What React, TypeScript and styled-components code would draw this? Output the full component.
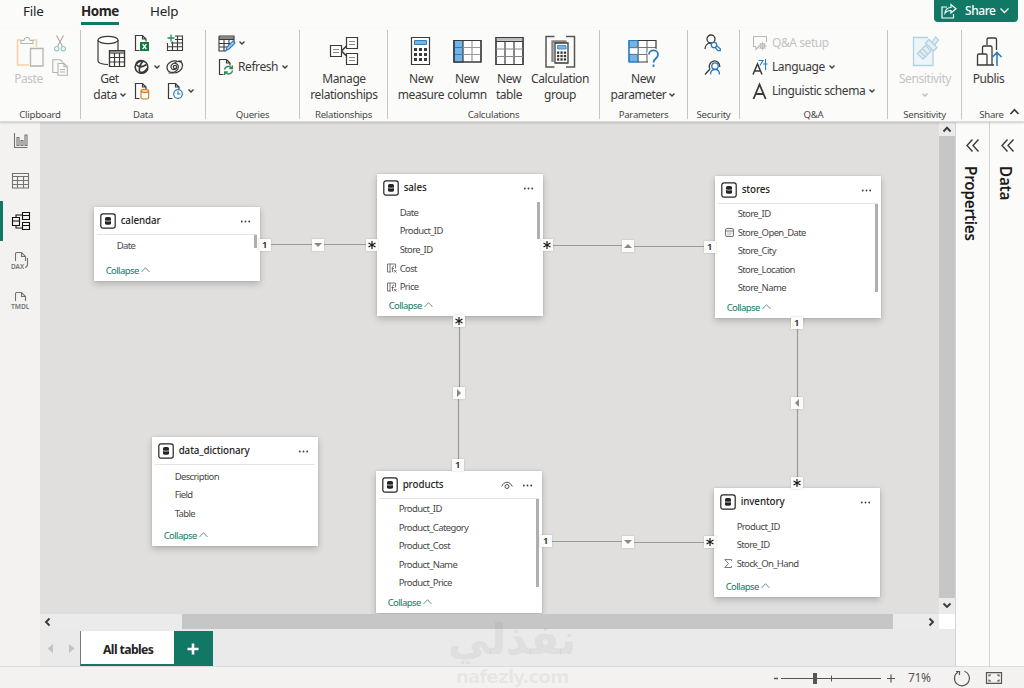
import React from "react";
import styled, { createGlobalStyle } from "styled-components";

const GREEN = "#117865";
const INK = "#3b3a39";
const BLUE = "#2b7cbf";

const GlobalStyle = createGlobalStyle`
  * { box-sizing: border-box; }
  body { margin: 0; overflow: hidden; font-family: "Noto Sans", "Open Sans", sans-serif; color: ${INK}; }
  svg { display: block; flex: none; overflow: visible; }
`;

/* ---------- shell ---------- */

const Shell = styled.div`
  position: relative;
  display: flex;
  flex-direction: column;
  width: 1024px;
  height: 688px;
  background: #fbfbfa;
  overflow: hidden;
`;

const TabStrip = styled.header`
  display: flex;
  justify-content: space-between;
  height: 28px;
  padding: 0 6px 0 23px;
`;

const MenuTabs = styled.nav`
  display: flex;
`;

const MenuTab = styled.div<{ $w: number; $gap: number; $active?: boolean }>`
  width: ${(p) => p.$w}px;
  height: 25px;
  margin-right: ${(p) => p.$gap}px;
  border-bottom: 3px solid ${(p) => (p.$active ? GREEN : "transparent")};
  font-size: 13.4px;
  line-height: 22px;
  letter-spacing: ${(p) => (p.$active ? -0.45 : -0.2)}px;
  font-weight: ${(p) => (p.$active ? 700 : 400)};
  color: #252423;
  white-space: nowrap;
`;

const ShareButton = styled.button`
  display: flex;
  align-items: center;
  gap: 9px;
  width: 84px;
  height: 22px;
  padding: 0 8px 0 7px;
  border: 0;
  border-radius: 0 0 4px 4px;
  background: ${GREEN};
  color: #fff;
  font: 500 12px/22px "Noto Sans", sans-serif;
  letter-spacing: -0.45px;
`;

const ShareText = styled.span`
  width: 30px;
  margin: 0 -4px 0 -1px;
`;

/* ---------- ribbon ---------- */

const Ribbon = styled.section`
  display: grid;
  grid-template-columns: 81px 125px 94px 88px 212px 88px 52px 148px 74px 62px;
  height: 94px;
  flex: none;
  padding-top: 2px;
  border-bottom: 1px solid #dddcdb;
  box-shadow: 0 1px 2px rgba(0, 0, 0, 0.18);
  z-index: 2;
`;

const Group = styled.div<{ $last?: boolean }>`
  display: flex;
  flex-direction: column;
  height: 89px;
  border-right: 1px solid ${(p) => (p.$last ? "transparent" : "#c8c6c4")};
`;

const GroupBody = styled.div<{ $left?: number }>`
  display: flex;
  flex: 1;
  min-height: 0;
  padding-left: ${(p) => p.$left ?? 0}px;
`;

const GroupName = styled.div<{ $last?: boolean }>`
  height: 13px;
  margin-bottom: -2px;
  position: relative;
  text-align: center;
  font-size: 9.6px;
  line-height: 14px;
  letter-spacing: -0.25px;
  color: #494847;
  padding-right: ${(p) => (p.$last ? 2 : 0)}px;
`;

const RibbonToggle = styled.span`
  position: absolute;
  right: 4px;
  top: 1px;
`;

const BigButton = styled.div<{ $w: number; $faded?: boolean }>`
  display: flex;
  flex-direction: column;
  align-items: center;
  width: ${(p) => p.$w}px;
  padding-top: 5px;
  font-size: 12px;
  line-height: 16px;
  letter-spacing: -0.42px;
  text-align: center;
  white-space: nowrap;
  color: ${(p) => (p.$faded ? "#c4c3c2" : INK)};
`;

const BigIcon = styled.div`
  display: grid;
  place-items: center;
  width: 32px;
  height: 32px;
  margin-bottom: 4px;
`;

const Inline = styled.span`
  display: flex;
  align-items: center;
  justify-content: center;
  gap: 3px;
  min-height: 16px;
`;

const Stack = styled.div<{ $w?: number; $left?: number }>`
  display: flex;
  flex-direction: column;
  padding-top: 1px;
  padding-left: ${(p) => p.$left ?? 0}px;
  width: ${(p) => (p.$w ? `${p.$w}px` : "auto")};
`;

const SmallButton = styled.div<{ $faded?: boolean }>`
  display: flex;
  align-items: center;
  gap: 4px;
  height: 24px;
  font-size: 12px;
  line-height: 16px;
  letter-spacing: -0.42px;
  white-space: nowrap;
  color: ${(p) => (p.$faded ? "#c4c3c2" : INK)};
`;

/* ---------- body ---------- */

const Body = styled.main`
  display: flex;
  height: 544px;
  flex: none;
`;

const Rail = styled.aside`
  display: flex;
  flex-direction: column;
  width: 40px;
  background: #f3f2f1;
  margin-top: -1px;
`;

const RailItem = styled.div<{ $active?: boolean }>`
  display: grid;
  place-items: center;
  height: 40px;
  padding-right: 1px;
  border-left: 3px solid ${(p) => (p.$active ? GREEN : "transparent")};
`;

const Workspace = styled.section`
  display: grid;
  grid-template-columns: 899px 16px;
  grid-template-rows: 492px 15px 37px;
  width: 915px;
`;

const Canvas = styled.div`
  position: relative;
  overflow: hidden;
  background: #e0dfde;
`;

const VScroll = styled.div`
  display: flex;
  flex-direction: column;
  align-items: center;
  background: #ebebeb;
`;

const VThumb = styled.div`
  width: 100%;
  height: 462px;
  background: #c6c6c6;
`;

const ScrollArrow = styled.div<{ $v?: boolean }>`
  display: grid;
  place-items: center;
  width: ${(p) => (p.$v ? 16 : 15)}px;
  height: ${(p) => (p.$v ? 14 : 15)}px;
`;

const HScroll = styled.div`
  display: flex;
  justify-content: space-between;
  background: #ebebeb;
`;

const HTrack = styled.div`
  flex: 1;
  padding-left: 127px;
`;

const HThumb = styled.div`
  width: 711px;
  height: 15px;
  background: #c6c6c6;
`;

const Corner = styled.div`
  background: #fff;
`;

const PageBar = styled.div`
  grid-column: 1 / 3;
  display: flex;
  align-items: flex-start;
  background: #eaeaea;
`;

const PageArrows = styled.div`
  display: flex;
  gap: 16px;
  width: 40px;
  padding: 15px 0 0 7px;
`;

const PageTab = styled.div`
  width: 94px;
  height: 35px;
  margin-top: 2px;
  padding-left: 2px;
  border-left: 1px solid #7a7978;
  border-bottom: 2px solid ${GREEN};
  background: #fff;
  text-align: center;
  font-size: 12.2px;
  font-weight: 700;
  letter-spacing: -0.6px;
  line-height: 37px;
  color: #252423;
`;

const AddPage = styled.div`
  display: grid;
  place-items: center;
  width: 39px;
  height: 35px;
  margin-top: 2px;
  background: ${GREEN};
`;

const SidePane = styled.aside`
  display: flex;
  flex-direction: column;
  align-items: center;
  width: 35px;
  padding-top: 17px;
  gap: 14px;
  border-left: 1px solid #d6d5d4;
  background: #fbfbfa;
`;

const PaneTitle = styled.h2`
  margin: 0 2px 0 0;
  writing-mode: vertical-rl;
  font-size: 15.2px;
  font-weight: 600;
  letter-spacing: -0.2px;
  line-height: 20px;
  color: #1b1a19;
`;

const StatusBar = styled.footer`
  display: flex;
  align-items: center;
  justify-content: flex-end;
  flex: none;
  height: 22px;
  padding: 1px 22px 0 0;
  border-top: 1px solid #dddcdb;
  background: #f3f2f1;
`;

const ZoomValue = styled.span`
  width: 46px;
  padding-left: 12px;
  font-size: 12px;
  line-height: 16px;
  letter-spacing: -0.4px;
  color: #555;
  margin-right: 12px;
`;

const StatusGap = styled.span`
  width: 15px;
`;

const Watermark = styled.div`
  position: absolute;
  left: 441px;
  top: 612px;
  width: 142px;
  z-index: 4;
  text-align: center;
  color: rgba(120, 120, 120, 0.11);
`;

const WatermarkArabic = styled.div`
  height: 53px;
  font: 700 42px/56px "DejaVu Sans", sans-serif;
  white-space: nowrap;
  -webkit-text-stroke: 1px rgba(120, 120, 120, 0.04);
`;

const WatermarkLatin = styled.div`
  font: 700 18.5px/24px "DejaVu Sans", sans-serif;
  letter-spacing: -1px;
`;

/* ---------- model cards ---------- */

const Card = styled.article<{ $x: number; $y: number; $h: number }>`
  position: absolute;
  left: ${(p) => p.$x}px;
  top: ${(p) => p.$y}px;
  display: flex;
  flex-direction: column;
  width: 166px;
  height: ${(p) => p.$h}px;
  background: #fff;
  box-shadow: 0 3px 7px rgba(0, 0, 0, 0.2), 0 0 2px rgba(0, 0, 0, 0.14);
`;

const CardHead = styled.div<{ $line?: boolean }>`
  display: flex;
  align-items: center;
  gap: 5px;
  height: 28px;
  margin: 0 3px;
  padding: 1px 5px 0 3px;
  border-bottom: 1px solid ${(p) => (p.$line ? "#e6e5e4" : "transparent")};
`;

const CardName = styled.span`
  flex: 1;
  font-size: 9.8px;
  font-weight: 500;
  line-height: 14px;
  padding-bottom: 1px;
  letter-spacing: -0.08px;
  color: #252423;
`;

const EyeSlot = styled.span`
  margin-right: 4px;
`;

const CardBody = styled.div`
  display: flex;
  flex: 1;
  justify-content: space-between;
  min-height: 0;
`;

const FieldList = styled.div<{ $top: number }>`
  padding-top: ${(p) => p.$top}px;
`;

const Field = styled.div`
  display: grid;
  grid-template-columns: 13px auto;
  align-items: center;
  height: 18.6px;
  padding-left: 10px;
  font-size: 9.5px;
  letter-spacing: -0.62px;
  white-space: nowrap;
  color: #494847;
`;

const CardThumb = styled.div<{ $h: number }>`
  width: 3px;
  height: ${(p) => p.$h}px;
  margin-right: 3px;
  background: #b0afae;
`;

const Collapse = styled.div`
  display: flex;
  align-items: center;
  gap: 2px;
  height: 22px;
  padding: 0 0 0 12px;
  font-size: 9.5px;
  letter-spacing: -0.58px;
  color: ${GREEN};
`;

const Marker = styled.div<{ $x: number; $y: number }>`
  position: absolute;
  left: ${(p) => p.$x - 6}px;
  top: ${(p) => p.$y - 6}px;
  display: grid;
  place-items: center;
  width: 12px;
  height: 12px;
  background: #fbfbfa;
  box-shadow: 0 0 2px rgba(0, 0, 0, 0.18);
  font-size: 9.5px;
  font-weight: 600;
  line-height: 12px;
  color: #252423;
`;

const Wires = styled.svg`
  position: absolute;
  left: 0;
  top: 0;
`;

/* ---------- icons ---------- */

const Chevron = ({ w = 6, color = INK, sw = 1.3, up = false }: { w?: number; color?: string; sw?: number; up?: boolean }) => (
  <svg width={w} height={w / 2 + 1} viewBox={`0 0 ${w} ${w / 2 + 1}`} fill="none" stroke={color} strokeWidth={sw}>
    <path d={up ? `M.5 ${w / 2 + 0.5}L${w / 2} .7L${w - 0.5} ${w / 2 + 0.5}` : `M.5 .5L${w / 2} ${w / 2}L${w - 0.5} .5`} />
  </svg>
);

const Svg = ({ w, h, children, s = INK, sw = 1.1 }: { w: number; h: number; children: React.ReactNode; s?: string; sw?: number }) => (
  <svg width={w} height={h} viewBox={`0 0 ${w} ${h}`} fill="none" stroke={s} strokeWidth={sw}>
    {children}
  </svg>
);

const PasteIcon = () => (
  <Svg w={32} h={32} s="#b5b4b3">
    <path d="M9 5H4.500V30H16M19 5h4.500v7" stroke="#f3d3a2" strokeWidth="1.600" />
    <path d="M8 8.500V5.500h3a3 3 0 0 1 6 0h3v3z" />
    <path d="M17.500 13.500h12.500v17.500h-12.500z" fill="#fbfbfa" strokeWidth="1.300" />
  </Svg>
);
const CutIcon = () => (
  <Svg w={16} h={17} s="#a9a8a7">
    <path d="M4.500 .5l6 11M11.500 .5l-6 11" />
    <circle cx="4.700" cy="13.700" r="2.200" stroke="#8fc7c4" />
    <circle cx="11.300" cy="13.700" r="2.200" stroke="#8fc7c4" />
  </Svg>
);
const CopyIcon = () => (
  <Svg w={16} h={17} s="#b5b4b3">
    <path d="M6 13.500H.8V.8h7.500l3 3" />
    <path d="M6 4.500h6l3.300 3.300v8.400H6zM12 4.500v3.300h3.300M8 10.500h5M8 13h5" fill="#fbfbfa" />
  </Svg>
);
const GetDataIcon = () => (
  <Svg w={32} h={32} sw={1.2}>
    <path d="M4 5v21c0 2 4.500 3.500 10 3.500M24 5v10" />
    <ellipse cx="14" cy="5" rx="10" ry="3.700" fill="#fff" />
    <path d="M15.500 15.500h15v16h-15z" fill="#fff" />
    <path d="M15.500 17.500h15" strokeWidth="3" stroke="#888" />
    <path d="M15.500 22.500h15M15.500 27h15M20.500 18v13M25.500 18v13M15.500 15.500h15v16h-15z" />
  </Svg>
);
const Page = ({ children }: { children: React.ReactNode }) => (
  <Svg w={16} h={18} sw={1.2}>
    <path d="M5.500 16.500H1.500V1.500H8.500l3.500 3.500v2.500M8.500 1.500v3.500h3.500" />
    {children}
  </Svg>
);
const ExcelIcon = () => (
  <Page>
    <path d="M6 8h9v9H6z" fill="#107c41" stroke="none" />
    <path d="M8.700 10.200l3.600 4.800M12.300 10.200l-3.600 4.800" stroke="#fff" strokeWidth="1.300" />
  </Page>
);
const HubIcon = () => (
  <Svg w={16} h={16}>
    <circle cx="7.500" cy="8" r="6.300" strokeWidth="1.600" />
    <path d="M2 5.500C4.500 8 8.500 8.500 12.500 5.500M6 14C4.500 10 5.500 6 9 2" strokeWidth="1.700" />
    <path d="M2.500 4.500C4.500 1.500 8 1.500 9.500 3M13.500 9.500C12 13 8.500 14.500 6 13.500" strokeWidth="2.400" />
  </Svg>
);
const SourceIcon = () => (
  <Page>
    <path d="M7 9v6.500c0 .8 1.700 1.500 3.800 1.500s3.800-.7 3.800-1.500V9" stroke="#d9822b" fill="#fff" />
    <ellipse cx="10.800" cy="9" rx="3.800" ry="1.600" stroke="#d9822b" fill="#f7d3a5" />
  </Page>
);
const EnterTableIcon = () => (
  <Svg w={18} h={18}>
    <path d="M9 2h7.500v14.500h-15V9M9 5.500h7.500M5 9h11.500M1.500 12.700h15M6.500 7.500v9M11.500 2v14.500" />
    <path d="M5 .5v7M1.500 4h7" stroke="#218d6b" strokeWidth="1.300" />
  </Svg>
);
const SwirlIcon = () => (
  <Svg w={18} h={16} sw={1.2}>
    <path d="M11 2C6 1 1 4 1 8.500c0 4.500 5 6 8.500 4 3.500-2 4-6.500 .5-8C7 3.500 4.500 6 5 8.500c.5 2.500 4 3 5.500 .5" />
    <path d="M2.500 14H7c5 0 9.500-3 9.500-7.500S11.500 1.500 8.500 4M12.500 2H16" />
    <circle cx="9" cy="8" r="1.700" />
  </Svg>
);
const RecentIcon = () => (
  <Svg w={18} h={18} sw={1.2}>
    <path d="M6.500 16.500H2.500V1.500H9.500l3.500 3.500v2M9.500 1.500v3.500h3.500" />
    <circle cx="12" cy="12" r="4.300" stroke={BLUE} fill="#fff" />
    <path d="M12 9.300V12h2.500" stroke={BLUE} />
  </Svg>
);
const TransformIcon = () => (
  <Svg w={17} h={17}>
    <path d="M1 3h15" strokeWidth="3" stroke="#888" />
    <path d="M1 1h15v6M8 16H1V1M1 4.500h15M1 8.500h12M1 12h8M6 4.500v11M11 4.500v6" />
    <path d="M8 15.500l1-3.500 6-6 2 2-6 6z" stroke={BLUE} fill="#a9d0f0" />
  </Svg>
);
const RefreshPageIcon = () => (
  <Page>
    <path d="M6.500 11.500a4 4 0 0 1 7.300-1.200M14.500 12.500a4 4 0 0 1-7.300 1.700M14.300 7.500v3h-3M6.700 17v-3h3" stroke="#2e8b57" strokeWidth="1.400" />
  </Page>
);
const ManageIcon = () => (
  <Svg w={30} h={30} sw={1.2}>
    <path d="M12.500 15l5-5M12.500 15l5 5" strokeWidth="1.600" />
    <path d="M1.500 9.500h11v11h-11zM17.500 1.500h11v11h-11zM17.500 17.500h11v11h-11z" fill="#fff" />
    <path d="M4 13.500h6M4 16.500h6M20 5.500h6M20 8.500h6M20 21.500h6M20 24.500h6" stroke="#888" />
  </Svg>
);
const CalcKeys = ({ x, y, d, s }: { x: number; y: number; d: number; s: number }) => (
  <g fill={INK} stroke="none">
    {[0, 1, 2].map((r) => [0, 1, 2].map((c) => <rect key={`${r}${c}`} x={x + c * d} y={y + r * d} width={s} height={s} />))}
  </g>
);
const MeasureIcon = () => (
  <Svg w={20} h={30} sw={1.2}>
    <path d="M.5 1.500h18v27h-18z" fill="#fff" />
    <path d="M3.500 4.500h12v4h-12z" fill="#6db5ea" stroke="#3a7db0" strokeWidth="1" />
    <CalcKeys x={3} y={12} d={5} s={3} />
  </Svg>
);
const ColumnIcon = () => (
  <Svg w={29} h={24} sw={1.2}>
    <path d="M1 1.500h27v21.500H1z" fill="#fff" />
    <path d="M1 1.500h9v21.500H1z" fill="#6db5ea" />
    <path d="M10 8.500h18M10 15.500h18M19 1.500v21.500" stroke="#999" />
    <path d="M1 8.500h9M1 15.500h9" stroke={BLUE} />
    <path d="M1 1.500h27v21.500H1z" />
  </Svg>
);
const TableIcon = () => (
  <Svg w={29} h={30} sw={1.2}>
    <path d="M1 1.500h27v27H1z" fill="#fff" />
    <path d="M1 3.300h27" stroke="#bbb" strokeWidth="3" />
    <path d="M1 5.500h27M10 5.500v23M19 5.500v23M1 1.500h27v27H1z" />
    <path d="M1 13h27M1 20.500h27" stroke="#888" />
  </Svg>
);
const CalcGroupIcon = () => (
  <Svg w={32} h={33} sw={1.3}>
    <path d="M10.500 1.500H2v30.500h8.500M22 1.500h8.500v30.500H22" stroke="#555" strokeWidth="1.500" />
    <path d="M8.500 27V6.500h14" stroke="#888" strokeWidth="2.400" />
    <path d="M11 8h13v20H11z" fill="#fff" />
    <path d="M13.500 10.500h8.500v3.500h-8.500z" fill="#6db5ea" stroke="#3a7db0" strokeWidth=".8" />
    <CalcKeys x={13} y={16.5} d={3.4} s={2.3} />
  </Svg>
);
const ParameterIcon = () => (
  <Svg w={31} h={25} sw={1.2}>
    <path d="M1 1.500h27v21.500H1z" fill="#fff" stroke="none" />
    <path d="M1 1.500h9v21.500H1z" fill="#6db5ea" stroke={BLUE} />
    <path d="M1 8.500h27M1 15.500h19M19 1.500v21.500M10 1.500v21.500" stroke="#777" />
    <path d="M1.500 12h8" stroke="#fff" strokeWidth="5.500" />
    <path d="M10 23h10M10 1.500h18V10" />
    <path d="M1 1.500v21.500M1 23h9M1 1.500h9" stroke={BLUE} />
    <path d="M21 15.500c0-5.500 9-5.500 9 0 0 4-4.500 4-4.500 8" stroke="#fbfbfa" strokeWidth="4" />
    <path d="M21 15.500c0-5.500 9-5.500 9 0 0 4-4.500 4-4.500 8M25.500 25.500v2.500" stroke={BLUE} strokeWidth="1.800" />
  </Svg>
);
const RolesIcon = () => (
  <Svg w={18} h={18} sw={1.3}>
    <circle cx="7" cy="5" r="4" />
    <path d="M1 15c0-3.500 2.500-6 6-6" />
    <circle cx="10" cy="11" r="2.700" stroke={BLUE} fill="#fbfbfa" />
    <path d="M12.300 11.500l4 3.200v2h-2.500l-2.500-3" stroke={BLUE} />
  </Svg>
);
const ViewAsIcon = () => (
  <Svg w={18} h={18} sw={1.3}>
    <path d="M6 11A5.300 5.300 0 1 1 15.800 9M1 16.500l5-5.500" />
    <circle cx="11" cy="8" r="3.200" stroke={BLUE} />
    <path d="M6.500 16.500c0-3.500 2-5 4.500-5s4.500 1.500 4.500 5" stroke={BLUE} />
  </Svg>
);
const QaIcon = () => (
  <Svg w={16} h={16} s="#b9b8b7">
    <path d="M4 11.500v3l3-3M4 11.500H1.500V1.500h13V7" />
    <circle cx="10.500" cy="11" r="2.500" />
    <path d="M10.500 6.700v8.600M6.200 11h8.600M7.500 8l6 6M13.500 8l-6 6" strokeWidth=".8" />
  </Svg>
);
const LanguageIcon = () => (
  <Svg w={16} h={17} sw={1.5}>
    <path d="M1 15.500L5.500 5l4.500 10.500M2.500 12h6" />
    <path d="M6.500 1.500h4.500L8 6.500M13.500 0v11M11 5h4.500" stroke={BLUE} strokeWidth="1.100" />
  </Svg>
);
const SchemaIcon = () => (
  <Svg w={16} h={17} sw={1.8}>
    <path d="M1.500 16L7.500 1.500 13.700 16M3.800 11h7.500" />
  </Svg>
);
const SensitivityIcon = () => (
  <Svg w={28} h={32} s="#b3d1e2" sw={1.3}>
    <path d="M22 15v15.500H2.500V2.500H17" fill="#edf5f9" />
    <path d="M6.500 18.500l8-8 5.500 5.500-8 8z" fill="#e4eff5" />
    <path d="M9 16.500l5 5M11.500 14l5 5" />
    <path d="M14.500 8l3.500-3.500 8 8-3.500 3.500zM21 7.500l3.500-5.500 3 3-4 5" fill="#e4eff5" />
  </Svg>
);
const PublishIcon = () => (
  <Svg w={26} h={31} sw={1.3}>
    <path d="M11 9V3.500q0-1.500 1.500-1.500h6.500q1.500 0 1.500 1.500V14M6.500 18v-6.500q0-1.500 1.500-1.500h6.500q1.500 0 1.500 1.500V29M1.500 29v-9.500q0-1.500 1.500-1.500h6.500q1.500 0 1.500 1.500V29M.8 29H18" />
    <path d="M21 30V17M16.500 21l4.500-4.500L25.500 21" stroke={BLUE} strokeWidth="1.600" />
  </Svg>
);
const ShareIcon = () => (
  <Svg w={16} h={17} s="#fff" sw={1.2}>
    <path d="M6 4H1v11h11.500v-4M4 10c.5-4 3-5.500 6-5.500V1.500l5 4.300-5 4.200V7.500C7.500 7.500 5.500 8 4 10z" />
  </Svg>
);

const RAIL = "#737271";
const ReportRailIcon = () => (
  <Svg w={15} h={16} s={RAIL}>
    <path d="M1.500 0v14.500h13M4 4.500h2v8h-2zM8 7.500h2v5h-2zM12 2h2v10.500h-2z" />
  </Svg>
);
const TableRailIcon = () => (
  <Svg w={17} h={16} s={RAIL}>
    <path d="M.5 .5h16v14.500H.5zM.5 3.500h16M.5 7.500h16M.5 11.500h16M5.500 3.500v12M11.500 3.500v12" />
  </Svg>
);
const ModelRailIcon = () => (
  <Svg w={19} h={18} s="#111" sw={1.1}>
    <path d="M1.500 5.500h7v8h-7zM1.500 9h7M11.500 .5h7v7h-7zM11.500 3.500h7M11.500 10.500h7v7h-7zM11.500 13.500h7M5 5.500V3h6.500M5 13.500V16h6.500" />
  </Svg>
);
const ScriptRailIcon = ({ name }: { name: string }) => (
  <svg width="19" height="18" viewBox="0 0 19 18" fill="none" stroke={RAIL} strokeWidth="1.1">
    <path d={name.length === 3 ? "M4.500 9V1.500q0-1 1-1h5l4 4V9M10.500 .5v4h4M16.500 6v6q0 3-2.500 3.500" : "M4.500 9V1.500q0-1 1-1h5l4 4V9M10.500 .5v4h4"} />
    <text x="0" y="16.500" stroke="none" fill={RAIL} fontSize="7.200" fontWeight="600" fontFamily="Noto Sans" textLength={name.length === 3 ? 13 : 18.500} lengthAdjust="spacingAndGlyphs">
      {name}
    </text>
  </svg>
);

const CardIcon = () => (
  <Svg w={16} h={16} s="#252423" sw={1.2}>
    <rect x=".8" y=".8" width="14.400" height="14.400" rx="2.200" />
    <path d="M5 5.200c0-1.500 6-1.500 6 0v5.500c0 1.500-6 1.500-6 0z" fill="#252423" stroke="none" />
    <path d="M4.500 7.700q3.500 1 7 0" stroke="#fff" strokeWidth=".7" />
  </Svg>
);
const Dots = () => (
  <svg width="12" height="3" viewBox="0 0 12 3" fill="#3b3a39">
    <circle cx="1.800" cy="1.500" r=".9" />
    <circle cx="5.500" cy="1.500" r=".9" />
    <circle cx="9.200" cy="1.500" r=".9" />
  </svg>
);
const EyeIcon = () => (
  <Svg w={12} h={9} sw={0.9}>
    <path d="M.7 5.500C2 2.500 4 1.200 6 1.200s4 1.300 5.300 4.300" />
    <circle cx="6" cy="5.500" r="2" />
  </Svg>
);
const CalcFieldIcon = () => (
  <Svg w={10} h={10} s="#666" sw={0.9}>
    <path d="M.5 1h8v4.500M4 9H.5V1M3 1v8M5.500 9V4.500q0-1.500 1.500-1.500M4.500 5.500h2.500M7 7l2.500 2.500M9.500 7L7 9.500" />
  </Svg>
);
const DateFieldIcon = () => (
  <Svg w={9} h={9} s="#666" sw={0.9}>
    <rect x=".5" y=".5" width="8" height="8" rx="1.500" />
    <path d="M.5 3h8M2.500 5h1M4.500 5h1M6.500 5h.7M2.500 6.800h1M4.500 6.800h1" />
  </Svg>
);
const SumFieldIcon = () => (
  <Svg w={9} h={9} s="#666" sw={0.9}>
    <path d="M7.500 2V.6H.8L4.500 4.500.8 8.500h6.700V7" />
  </Svg>
);

/* ---------- data ---------- */

type FieldDef = { name: string; kind?: "calc" | "date" | "sum" };
type CardDef = { name: string; x: number; y: number; h: number; top?: number; thumb?: number; line?: boolean; eye?: boolean; fields: FieldDef[] };

const cards: CardDef[] = [
  { name: "calendar", x: 54, y: 85, h: 74, thumb: 13, line: true, fields: [{ name: "Date" }] },
  {
    name: "sales", x: 337, y: 52, h: 142, thumb: 37,
    fields: [{ name: "Date" }, { name: "Product_ID" }, { name: "Store_ID" }, { name: "Cost", kind: "calc" }, { name: "Price", kind: "calc" }],
  },
  {
    name: "stores", x: 675, y: 54, h: 142, top: 0.3, thumb: 88, line: true,
    fields: [{ name: "Store_ID" }, { name: "Store_Open_Date", kind: "date" }, { name: "Store_City" }, { name: "Store_Location" }, { name: "Store_Name" }],
  },
  { name: "data_dictionary", x: 112, y: 315, h: 109, top: 2, line: true, fields: [{ name: "Description" }, { name: "Field" }, { name: "Table" }] },
  {
    name: "products", x: 336, y: 349, h: 142, top: 0.3, thumb: 88, line: true, eye: true,
    fields: [{ name: "Product_ID" }, { name: "Product_Category" }, { name: "Product_Cost" }, { name: "Product_Name" }, { name: "Product_Price" }],
  },
  { name: "inventory", x: 674, y: 366, h: 109, fields: [{ name: "Product_ID" }, { name: "Store_ID" }, { name: "Stock_On_Hand", kind: "sum" }] },
];

type MarkerKind = "one" | "many" | "up" | "down" | "left" | "right";
const markers: [number, number, MarkerKind][] = [
  [225, 123, "one"], [278, 123, "down"], [332, 123, "many"],
  [507, 123, "many"], [588, 124, "up"], [670, 125, "one"],
  [419, 199, "many"], [419, 271, "right"], [418, 343, "one"],
  [757, 201, "one"], [757, 281, "left"], [757, 361, "many"],
  [506, 419, "one"], [588, 420, "down"], [670, 420, "many"],
];

const arrows: Record<string, string> = {
  up: "M1 7L5 3L9 7z",
  down: "M1 3L5 7L9 3z",
  left: "M7 1L3 5L7 9z",
  right: "M3 1L7 5L3 9z",
};

const fieldIcon = { calc: <CalcFieldIcon />, date: <DateFieldIcon />, sum: <SumFieldIcon /> };

const MarkerGlyph = ({ kind }: { kind: MarkerKind }) => {
  if (kind === "one") return <>1</>;
  return (
    <svg width="10" height="10" viewBox="0 0 10 10">
      {kind === "many" ? (
        <path d="M5 1v8M1.500 3l7 4M8.500 3l-7 4" stroke="#1b1a19" strokeWidth="1.200" />
      ) : (
        <path d={arrows[kind]} fill="#8a8988" />
      )}
    </svg>
  );
};

const ModelCard = ({ card }: { card: CardDef }) => (
  <Card $x={card.x} $y={card.y} $h={card.h}>
    <CardHead $line={card.line}>
      <CardIcon />
      <CardName>{card.name}</CardName>
      {card.eye && <EyeSlot><EyeIcon /></EyeSlot>}
      <Dots />
    </CardHead>
    <CardBody>
      <FieldList $top={card.top ?? 1}>
        {card.fields.map((f) => (
          <Field key={f.name}>
            <span>{f.kind && fieldIcon[f.kind]}</span>
            {f.name}
          </Field>
        ))}
      </FieldList>
      {card.thumb && <CardThumb $h={card.thumb} />}
    </CardBody>
    <Collapse>
      Collapse <Chevron w={9} sw={0.9} color="#58877c" up />
    </Collapse>
  </Card>
);

const Big = ({ w, icon, top, bottom, faded, menu }: { w: number; icon: React.ReactNode; top: string; bottom?: string; faded?: boolean; menu?: boolean }) => (
  <BigButton $w={w} $faded={faded}>
    <BigIcon>{icon}</BigIcon>
    <span>{top}</span>
    <Inline>
      {bottom}
      {menu && <Chevron color={faded ? "#bbb" : INK} />}
    </Inline>
  </BigButton>
);

export default function App() {
  return (
    <>
      <GlobalStyle />
      <Shell>
        <TabStrip>
          <MenuTabs>
            <MenuTab $w={21} $gap={37}>File</MenuTab>
            <MenuTab $w={38} $gap={31} $active>Home</MenuTab>
            <MenuTab $w={29} $gap={0}>Help</MenuTab>
          </MenuTabs>
          <ShareButton>
            <ShareIcon />
            <ShareText>Share</ShareText>
            <Chevron w={9} color="#fff" />
          </ShareButton>
        </TabStrip>

        <Ribbon>
          <Group>
            <GroupBody $left={7}>
              <Big w={43} icon={<PasteIcon />} top="Paste" faded />
              <Stack $left={2}>
                <SmallButton><CutIcon /></SmallButton>
                <SmallButton><CopyIcon /></SmallButton>
              </Stack>
            </GroupBody>
            <GroupName>Clipboard</GroupName>
          </Group>
          <Group>
            <GroupBody $left={5}>
              <Big w={47} icon={<GetDataIcon />} top="Get" bottom="data" menu />
              <Stack $w={33} $left={1}>
                <SmallButton><ExcelIcon /></SmallButton>
                <SmallButton><HubIcon /><Chevron /></SmallButton>
                <SmallButton><SourceIcon /></SmallButton>
              </Stack>
              <Stack>
                <SmallButton><EnterTableIcon /></SmallButton>
                <SmallButton><SwirlIcon /></SmallButton>
                <SmallButton><RecentIcon /><Chevron /></SmallButton>
              </Stack>
            </GroupBody>
            <GroupName>Data</GroupName>
          </Group>
          <Group>
            <GroupBody $left={12}>
              <Stack>
                <SmallButton><TransformIcon /><Chevron /></SmallButton>
                <SmallButton><RefreshPageIcon />Refresh<Chevron /></SmallButton>
              </Stack>
            </GroupBody>
            <GroupName>Queries</GroupName>
          </Group>
          <Group>
            <GroupBody $left={6}>
              <Big w={76} icon={<ManageIcon />} top="Manage" bottom="relationships" />
            </GroupBody>
            <GroupName>Relationships</GroupName>
          </Group>
          <Group>
            <GroupBody $left={9}>
              <Big w={48} icon={<MeasureIcon />} top="New" bottom="measure" />
              <Big w={44} icon={<ColumnIcon />} top="New" bottom="column" />
              <Big w={40} icon={<TableIcon />} top="New" bottom="table" />
              <Big w={62} icon={<CalcGroupIcon />} top="Calculation" bottom="group" />
            </GroupBody>
            <GroupName>Calculations</GroupName>
          </Group>
          <Group>
            <GroupBody $left={7}>
              <Big w={72} icon={<ParameterIcon />} top="New" bottom="parameter" menu />
            </GroupBody>
            <GroupName>Parameters</GroupName>
          </Group>
          <Group>
            <GroupBody $left={16}>
              <Stack>
                <SmallButton><RolesIcon /></SmallButton>
                <SmallButton><ViewAsIcon /></SmallButton>
              </Stack>
            </GroupBody>
            <GroupName>Security</GroupName>
          </Group>
          <Group>
            <GroupBody $left={12}>
              <Stack>
                <SmallButton $faded><QaIcon />Q&amp;A setup</SmallButton>
                <SmallButton><LanguageIcon />Language<Chevron /></SmallButton>
                <SmallButton><SchemaIcon />Linguistic schema<Chevron /></SmallButton>
              </Stack>
            </GroupBody>
            <GroupName>Q&amp;A</GroupName>
          </Group>
          <Group>
            <GroupBody $left={4}>
              <Big w={66} icon={<SensitivityIcon />} top="Sensitivity" faded menu />
            </GroupBody>
            <GroupName>Sensitivity</GroupName>
          </Group>
          <Group $last>
            <GroupBody $left={4}>
              <Big w={45} icon={<PublishIcon />} top="Publis" />
            </GroupBody>
            <GroupName $last>
              Share
              <RibbonToggle>
                <Chevron w={9} sw={1.7} up />
              </RibbonToggle>
            </GroupName>
          </Group>
        </Ribbon>

        <Body>
          <Rail>
            <RailItem><ReportRailIcon /></RailItem>
            <RailItem><TableRailIcon /></RailItem>
            <RailItem $active><ModelRailIcon /></RailItem>
            <RailItem><ScriptRailIcon name="DAX" /></RailItem>
            <RailItem><ScriptRailIcon name="TMDL" /></RailItem>
          </Rail>

          <Workspace>
            <Canvas>
              <Wires width="899" height="492" fill="none" stroke="#9b9a99" strokeWidth="1.2">
                <path d="M220 122.500H337M503 123.500H588V124.500H675M419.500 194V271H418.500V349M757.500 196V366M502 419.500H588V420.500H674" />
              </Wires>
              {cards.map((c) => <ModelCard key={c.name} card={c} />)}
              {markers.map(([x, y, kind]) => (
                <Marker key={`${x}-${y}`} $x={x} $y={y}>
                  <MarkerGlyph kind={kind} />
                </Marker>
              ))}
            </Canvas>
            <VScroll>
              <ScrollArrow $v><Chevron w={8} sw={1.9} up /></ScrollArrow>
              <VThumb />
              <ScrollArrow $v><Chevron w={8} sw={1.9} /></ScrollArrow>
            </VScroll>
            <HScroll>
              <ScrollArrow>
                <Svg w={6} h={8} sw={1.9}><path d="M5.500 .5L2 4L5.500 7.500" /></Svg>
              </ScrollArrow>
              <HTrack><HThumb /></HTrack>
              <ScrollArrow>
                <Svg w={6} h={8} sw={1.9}><path d="M1.500 .5L5 4L1.500 7.500" /></Svg>
              </ScrollArrow>
            </HScroll>
            <Corner />
            <PageBar>
              <PageArrows>
                <svg width="6" height="9" fill="#c4c3c2"><path d="M6 0v9L.5 4.500z" /></svg>
                <svg width="6" height="9" fill="#c4c3c2"><path d="M0 0v9l5.500-4.500z" /></svg>
              </PageArrows>
              <PageTab>All tables</PageTab>
              <AddPage>
                <Svg w={12} h={12} s="#fff" sw={2.6}><path d="M6 .5v11M.5 6h11" /></Svg>
              </AddPage>
            </PageBar>
          </Workspace>

          <SidePane>
            <Svg w={13} h={13} sw={1.4}><path d="M6.500 .5l-5.500 6 5.500 6M12.500 .5l-5.500 6 5.500 6" /></Svg>
            <PaneTitle>Properties</PaneTitle>
          </SidePane>
          <SidePane>
            <Svg w={13} h={13} sw={1.4}><path d="M6.500 .5l-5.500 6 5.500 6M12.500 .5l-5.500 6 5.500 6" /></Svg>
            <PaneTitle>Data</PaneTitle>
          </SidePane>
        </Body>

        <StatusBar>
          <Svg w={124} h={12} s="#555">
            <path d="M2 6.500h4" strokeWidth="1.500" />
            <path d="M9 6.500h100M59.500 3.500v6" strokeWidth="1" />
            <path d="M43 1v11" strokeWidth="4" />
            <path d="M115 6.500h8M119 2.500v8" strokeWidth="1.200" />
          </Svg>
          <ZoomValue>71%</ZoomValue>
          <Svg w={16} h={16} s="#555" sw={1.2}>
            <path d="M4 2A7.500 7.500 0 1 0 10.500 1.300M2 1.500h3.500V5" />
          </Svg>
          <StatusGap />
          <Svg w={17} h={12} s="#555" sw={1.2}>
            <path d="M1.500 .7h15v10.600h-15zM4 4.500V3h2M12 3h2v1.500M4 7.500V9h2M12 9h2V7.500" />
          </Svg>
        </StatusBar>

        <Watermark>
          <WatermarkArabic lang="ar" dir="rtl">نفذلي</WatermarkArabic>
          <WatermarkLatin>nafezly.com</WatermarkLatin>
        </Watermark>
      </Shell>
    </>
  );
}
